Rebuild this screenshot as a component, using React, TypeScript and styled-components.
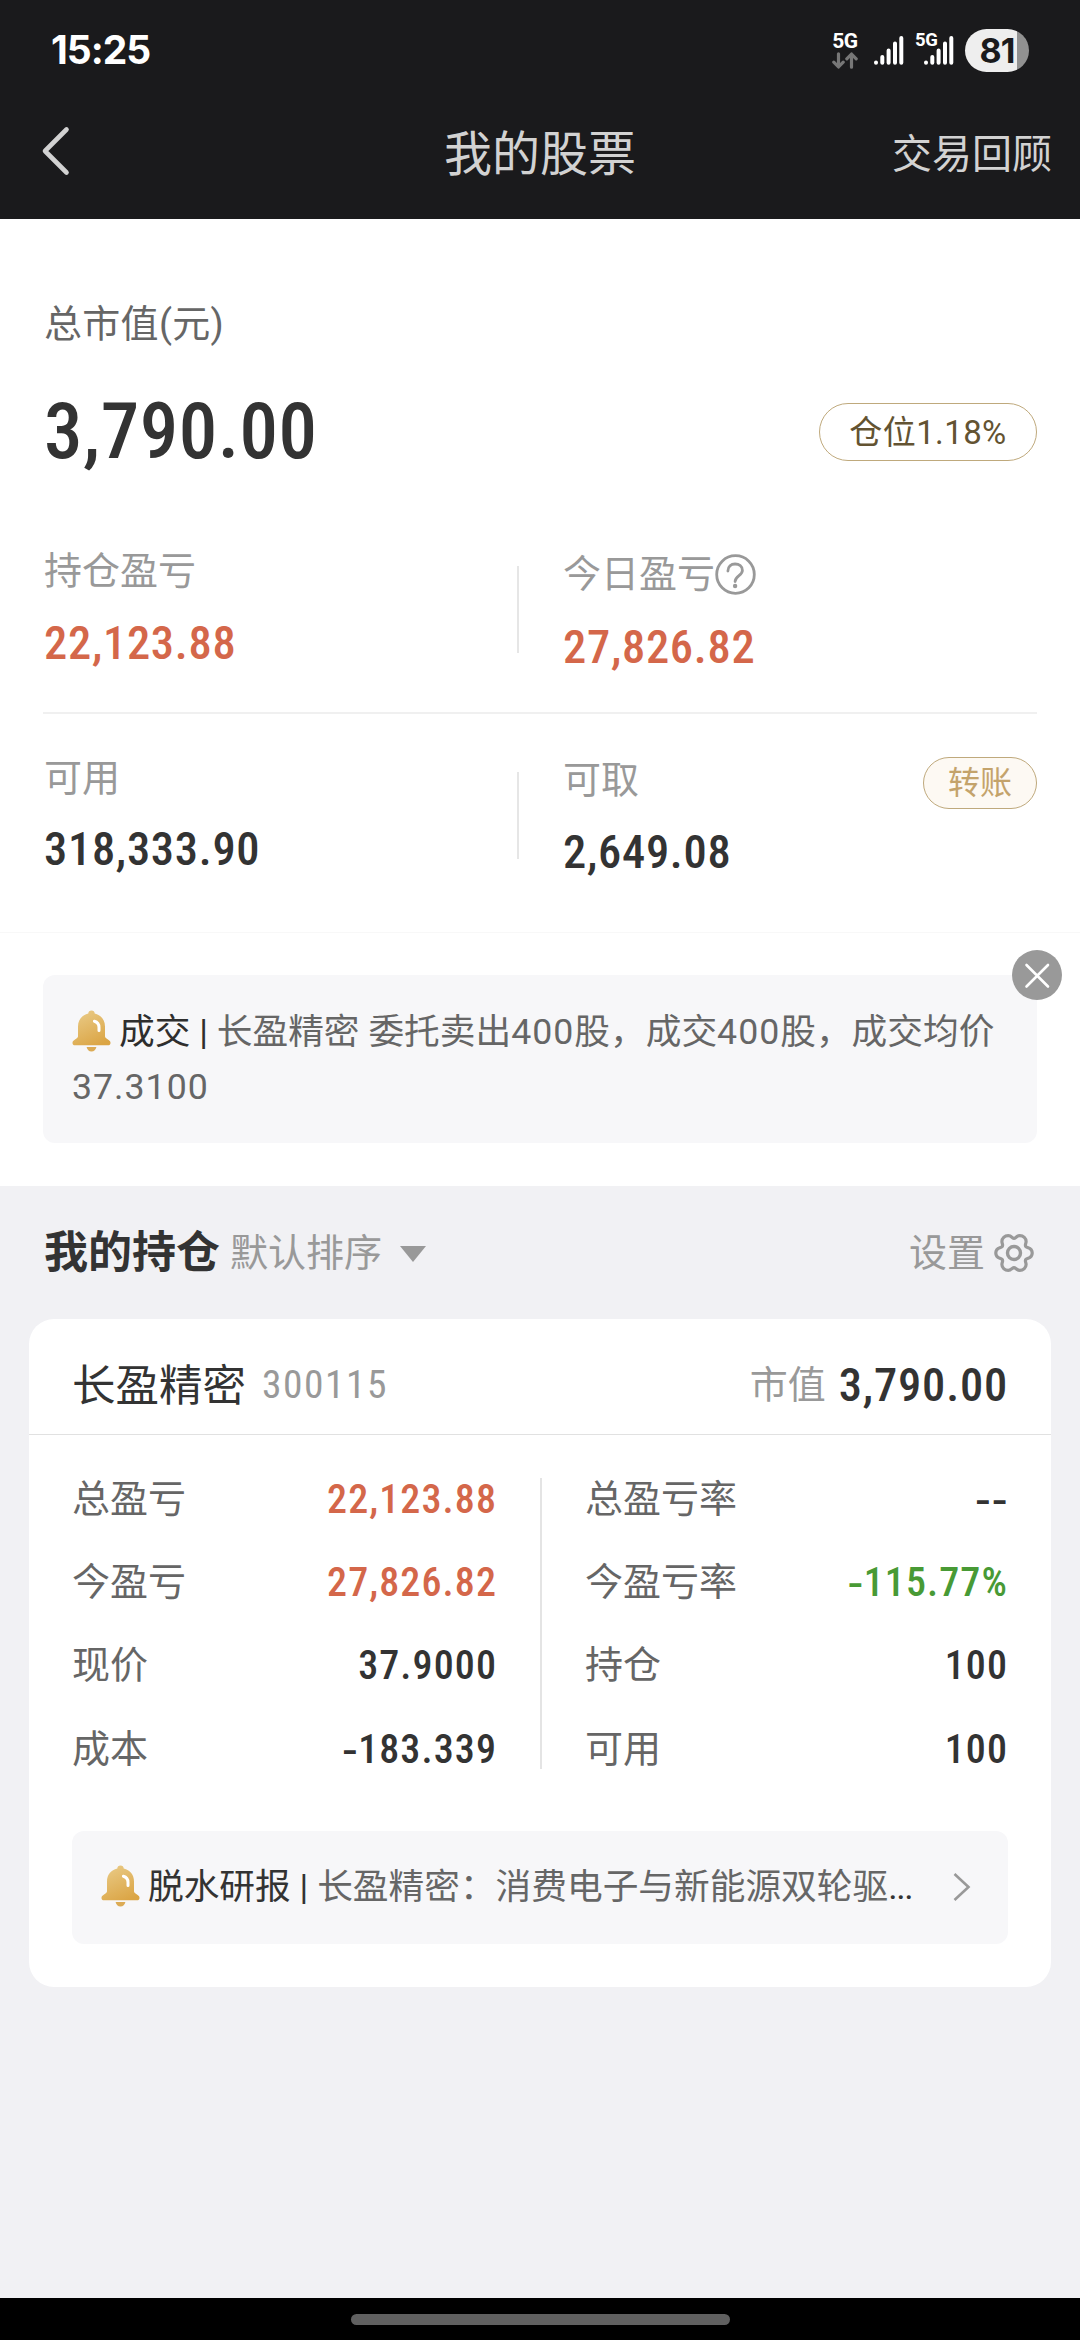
import React from 'react';
import styled, { createGlobalStyle } from 'styled-components';

const GlobalStyle = createGlobalStyle`
  * { box-sizing: border-box; }
  body {
    margin: 0;
    background: #f1f1f4;
    font-family: Roboto, "Noto Sans CJK SC", sans-serif;
    color: #333;
  }
  svg { display: block; flex: none; }
`;

const numeric = '"Roboto Condensed", Roboto, sans-serif';
const red = '#d4674a';
const green = '#489a35';
const ink = '#333333';

const Screen = styled.div`
  display: flex;
  flex-direction: column;
  width: 1080px;
  height: 2340px;
  overflow: hidden;
`;

/* ---------- status bar ---------- */
const StatusBar = styled.div`
  display: flex;
  justify-content: space-between;
  align-items: center;
  height: 100px;
  padding: 0 51px;
  background: #1a1a1c;
`;

const Clock = styled.div`
  font: 700 39px/44px Inter, sans-serif;
  letter-spacing: -1px;
  color: #fff;
`;

const StatusIcons = styled.div`
  display: flex;
  align-items: center;
`;

const Network = styled.div`
  display: flex;
  flex-direction: column;
  align-items: center;
  gap: 3px;
  width: 26px;
  margin: 2px 16px 0 0;
`;

const NetworkText = styled.span`
  font: 700 21px/16px Roboto, sans-serif;
  letter-spacing: -0.4px;
  color: #fff;
`;

const SecondSim = styled.div`
  position: relative;
  margin: 0 11px 0 20px;
`;

const SimTag = styled.span`
  position: absolute;
  left: -9px;
  top: -3px;
  font: 700 18.5px/16px Roboto, sans-serif;
  letter-spacing: -0.4px;
  color: #fff;
`;

const Battery = styled.div`
  display: flex;
  align-items: center;
  justify-content: center;
  width: 64px;
  height: 43px;
  border-radius: 22px;
  background: linear-gradient(to right, #eeeeee 81%, #919191 81%);
  font: 700 34px/43px Inter, sans-serif;
  letter-spacing: -1px;
  color: #1a1a1c;
`;

/* ---------- title bar ---------- */
const TitleBar = styled.header`
  display: grid;
  grid-template-columns: 200px 1fr 200px;
  align-items: center;
  height: 119px;
  padding: 0 28px 10px 41px;
  background: #1a1a1c;
  color: #d2d2d2;
`;

const BackSlot = styled.div`
  margin-bottom: 7px;
`;

const Title = styled.h1`
  margin: 0 0 0 -13px;
  font-size: 48px;
  line-height: 60px;
  font-weight: 400;
  text-align: center;
`;

const TitleAction = styled.div`
  font-size: 40px;
  line-height: 60px;
  text-align: right;
  white-space: nowrap;
`;

/* ---------- account summary ---------- */
const Summary = styled.section`
  display: flex;
  flex-direction: column;
  height: 713px;
  padding: 77px 43px 0;
  background: #fff;
`;

const SummaryLabel = styled.div`
  padding-left: 1px;
  font-size: 38px;
  line-height: 56px;
  letter-spacing: 0.3px;
  color: #666;
`;

const TotalRow = styled.div`
  display: flex;
  justify-content: space-between;
  align-items: center;
  height: 58px;
  margin-top: 51px;
`;

const TotalValue = styled.div`
  padding-left: 1px;
  font: 550 77px/58px ${numeric};
  letter-spacing: 0.5px;
`;

const Pill = styled.div<{ $soft?: boolean }>`
  display: flex;
  align-items: center;
  justify-content: center;
  width: ${(p) => (p.$soft ? 114 : 218)}px;
  height: ${(p) => (p.$soft ? 52 : 58)}px;
  margin-top: ${(p) => (p.$soft ? 4 : 0)}px;
  border: 1px solid #bfa97c;
  border-radius: 29px;
  background: ${(p) => (p.$soft ? '#fdf9f3' : '#fff')};
  color: ${(p) => (p.$soft ? '#c4a36b' : '#635332')};
  font-size: ${(p) => (p.$soft ? 32 : 33)}px;
  letter-spacing: ${(p) => (p.$soft ? 0 : 0.4)}px;
  line-height: 1;
`;

const StatRow = styled.div<{ $top: number; $height: number }>`
  display: flex;
  height: ${(p) => p.$height}px;
  padding-top: ${(p) => p.$top}px;
  flex: none;
`;

const Stat = styled.div<{ $gap: number; $shift?: number; $first?: boolean }>`
  display: flex;
  flex-direction: column;
  gap: ${(p) => p.$gap}px;
  width: ${(p) => (p.$first ? '474px' : 'auto')};
  padding: ${(p) => p.$shift || 0}px 0 0 ${(p) => (p.$first ? 1 : 0)}px;
  flex: ${(p) => (p.$first ? 'none' : 1)};
`;

const StatLabel = styled.div`
  display: flex;
  align-items: center;
  font-size: 38px;
  line-height: 50px;
  color: #999;
`;

const StatValue = styled.div<{ $color?: string }>`
  font: 540 46.5px/50px ${numeric};
  letter-spacing: 0.7px;
  color: ${(p) => p.$color || ink};
`;

const StatDivider = styled.div<{ $top: number }>`
  width: 2px;
  height: 87px;
  margin: ${(p) => p.$top}px 44px 0 0;
  background: #e6e6e6;
`;

const Rule = styled.div`
  height: 2px;
  flex: none;
  background: #f0f0f0;
`;

/* ---------- notices ---------- */
const NoticeSection = styled.section`
  height: 254px;
  padding: 42px 43px 0;
  border-top: 1px solid #f8f8f8;
  background: #fff;
`;

const DealNotice = styled.div`
  position: relative;
  height: 168px;
  padding: 30px 29px 0;
  border-radius: 12px;
  background: #f7f7f9;
`;

const NoticeText = styled.div`
  font-size: 35.7px;
  line-height: 55px;
  color: #666;
`;

const BellSlot = styled.span`
  display: inline-block;
  width: 39px;
  margin-right: 8px;
  vertical-align: -8px;
`;

const Strong = styled.span`
  color: #2e2e2e;
`;

const Digits = styled.span`
  letter-spacing: 1px;
`;

const CloseButton = styled.div`
  position: absolute;
  right: -25px;
  top: -25px;
`;

const ReportNotice = styled.div`
  display: flex;
  align-items: center;
  justify-content: space-between;
  height: 113px;
  margin: 40px 43px 0;
  padding: 0 37px 0 29px;
  border-radius: 12px;
  background: #f7f7f9;
`;

const ReportText = styled.div`
  white-space: nowrap;
  font-size: 35.7px;
  line-height: 55px;
  color: ${ink};
`;

const Muted = styled.span`
  color: #666;
`;

const Dots = styled.span`
  letter-spacing: -1.4px;
`;

/* ---------- holdings ---------- */
const HoldingsBar = styled.div`
  display: flex;
  align-items: center;
  height: 133px;
  padding: 0 46px 0 44px;
  color: #999;
  font-size: 38px;
  line-height: 56px;
`;

const HoldingsTitle = styled.h2`
  margin: 0 10px 0 0;
  font-size: 44px;
  line-height: 56px;
  font-weight: 700;
  color: ${ink};
`;

const SortArrow = styled.span`
  margin: 3px auto 0 18px;
  border: 13px solid transparent;
  border-top: 16px solid #999;
  border-bottom: 0;
`;

const SettingsLabel = styled.span`
  margin-right: 9px;
`;

const Card = styled.section`
  display: flex;
  flex-direction: column;
  height: 668px;
  margin: 0 29px;
  border-radius: 25px;
  background: #fff;
`;

const CardHeader = styled.div`
  display: flex;
  align-items: center;
  height: 116px;
  padding: 17px 43px 0;
  border-bottom: 1px solid #e1e1e1;
  color: #999;
`;

const StockName = styled.div`
  margin-top: 3px;
  font-size: 43.5px;
  line-height: 56px;
  color: ${ink};
`;

const StockCode = styled.div`
  margin: 0 auto 0 16px;
  font: 400 39.5px/56px ${numeric};
  letter-spacing: 1.5px;
`;

const MarketLabel = styled.div`
  margin-right: 13px;
  font-size: 38px;
  line-height: 56px;
`;

const MarketValue = styled.div`
  font: 540 46.5px/56px ${numeric};
  letter-spacing: 0.8px;
  color: ${ink};
`;

const Details = styled.div`
  display: grid;
  grid-template-columns: 425px 2px 423px;
  column-gap: 43px;
  padding: 22px 41px 0 43px;
`;

const DetailColumn = styled.div`
  display: flex;
  flex-direction: column;
`;

const DetailRow = styled.div`
  display: flex;
  align-items: center;
  justify-content: space-between;
  height: 83.4px;
`;

const DetailLabel = styled.span`
  font-size: 38px;
  line-height: 56px;
  color: #666;
`;

const DetailValue = styled.span<{ $color?: string }>`
  margin-top: 2px;
  font: 490 40px/56px ${numeric};
  letter-spacing: 1.1px;
  color: ${(p) => p.$color || ink};
`;

const Sign = styled.span`
  font: 600 36px/56px Inter, sans-serif;
  letter-spacing: 0;
`;

const DetailDivider = styled.div`
  margin: 21px 0 22px;
  background: #e4e4e4;
`;

const GestureBar = styled.div`
  display: flex;
  justify-content: center;
  height: 42px;
  margin-top: auto;
  padding-top: 16px;
  background: #000;
`;

const GestureHandle = styled.div`
  width: 379px;
  height: 11px;
  border-radius: 6px;
  background: #606060;
`;

/* ---------- icons ---------- */
const SignalIcon = () => (
  <svg width="30" height="30" viewBox="0 0 30 30" stroke="#fff" strokeWidth="4" strokeLinecap="round">
    <path d="M2 27.4v.4M8.3 22v5.8M14.6 15.6v12.2M21 8.6v19.2M27.3 3v24.8" />
  </svg>
);

const DataArrows = () => (
  <svg width="26" height="17" viewBox="0 0 26 17" fill="none" stroke="#777" strokeWidth="3.2" strokeLinecap="round" strokeLinejoin="round">
    <path d="M6.5 1.8v13M1.8 10.2l4.7 4.8 4.7-4.8M19.5 15.2v-13M14.8 6.8L19.5 2l4.7 4.8" />
  </svg>
);

const BackIcon = () => (
  <svg width="30" height="52" viewBox="0 0 30 52" fill="none" stroke="#d2d2d2" strokeWidth="4.6" strokeLinecap="round" strokeLinejoin="round">
    <path d="M25.5 4.500L4 26l21.500 21.500" />
  </svg>
);

const HelpIcon = () => (
  <svg width="41" height="41" viewBox="0 0 41 41" fill="none" stroke="#999" strokeWidth="2.8" strokeLinecap="round">
    <circle cx="20.5" cy="20.5" r="18.8" />
    <path d="M12.9 17c0-4.6 3.2-7 7.2-7s7.3 2.400 7.300 6.400c0 5-7.300 5.400-7.300 11.200" />
    <circle cx="20.100" cy="32" r="2.200" fill="#999" stroke="none" />
  </svg>
);

const BellIcon = ({ id }: { id: string }) => (
  <svg width="39" height="42" viewBox="0 0 39 42">
    <defs>
      <linearGradient id={id} x1="0.2" y1="0" x2="0.7" y2="1">
        <stop offset="0" stopColor="#e9ca86" />
        <stop offset="1" stopColor="#dba545" />
      </linearGradient>
    </defs>
    <path
      d="M19.500.5c1.900 0 3.200 1.300 3.200 3.100C29 5 33 9.800 33 16.500V26c0 1 .4 1.600 1.200 2.200l2.800 2c1.200.9 1.500 1.700 1.500 2.700 0 1.400-1 2.300-2.500 2.300H3C1.500 35.200.5 34.300.5 32.900c0-1 .3-1.800 1.500-2.700l2.800-2C5.600 27.600 6 27 6 26v-9.500C6 9.800 10 5 16.300 3.600c0-1.800 1.300-3.100 3.200-3.100z"
      fill={`url(#${id})`}
    />
    <path d="M14.600 37h9.800c-.5 2.700-2.300 4.500-4.900 4.500s-4.400-1.800-4.900-4.500z" fill="#dcab55" />
    <path d="M22.400 11.200c3 .8 4.600 3 4.600 6.200v3" fill="none" stroke="#fff" strokeWidth="3" strokeLinecap="round" />
  </svg>
);

const CloseIcon = () => (
  <svg width="50" height="50" viewBox="0 0 50 50">
    <circle cx="25" cy="25" r="25" fill="#999" />
    <path d="M14.500 15l21.500 21.500M36 15L14.500 36.500" stroke="#fff" strokeWidth="2.600" strokeLinecap="round" />
  </svg>
);

const GearIcon = () => (
  <svg width="40" height="40" viewBox="0 0 40 40" fill="none" stroke="#999" strokeLinejoin="round">
    <path
      strokeWidth="3.200"
      d="M20 5.400C21.600 5.400 22.400 2.700 25.800 2.700C29.400 2.700 32.100 5.400 32.100 8.600C32.100 10.800 30.600 12 31.800 13.600C33.800 15.400 38.200 14.200 38.200 20C38.200 25.800 33.800 24.600 31.800 26.400C30.600 28 32.100 29.200 32.100 31.400C32.100 34.600 29.400 37.300 25.800 37.300C22.400 37.300 21.600 34.600 20 34.600C18.400 34.600 17.600 37.300 14.200 37.300C10.600 37.300 7.900 34.600 7.900 31.400C7.900 29.200 9.400 28 8.200 26.400C6.200 24.600 1.800 25.800 1.800 20C1.800 14.200 6.200 15.400 8.200 13.600C9.400 12 7.900 10.800 7.900 8.600C7.900 5.400 10.600 2.700 14.200 2.700C17.600 2.700 18.400 5.400 20 5.400Z"
    />
    <circle cx="20" cy="20" r="6.500" strokeWidth="3.400" />
  </svg>
);

const ChevronIcon = () => (
  <svg width="18" height="32" viewBox="0 0 18 32" fill="none" stroke="#999" strokeWidth="2.600">
    <path d="M1.500 3l14 13-14 13" />
  </svg>
);

interface Detail {
  label: string;
  sign?: string;
  value?: string;
  color?: string;
}

const leftDetails: Detail[] = [
  { label: '总盈亏', value: '22,123.88', color: red },
  { label: '今盈亏', value: '27,826.82', color: red },
  { label: '现价', value: '37.9000' },
  { label: '成本', sign: '-', value: '183.339' },
];

const rightDetails: Detail[] = [
  { label: '总盈亏率', sign: '--' },
  { label: '今盈亏率', sign: '-', value: '115.77%', color: green },
  { label: '持仓', value: '100' },
  { label: '可用', value: '100' },
];

const DetailList = ({ items }: { items: Detail[] }) => (
  <DetailColumn>
    {items.map((item) => (
      <DetailRow key={item.label}>
        <DetailLabel>{item.label}</DetailLabel>
        <DetailValue $color={item.color}>
          {item.sign && <Sign>{item.sign}</Sign>}
          {item.value}
        </DetailValue>
      </DetailRow>
    ))}
  </DetailColumn>
);

export default function App() {
  return (
    <Screen>
      <GlobalStyle />
      <StatusBar>
        <Clock>15:25</Clock>
        <StatusIcons>
          <Network>
            <NetworkText>5G</NetworkText>
            <DataArrows />
          </Network>
          <SignalIcon />
          <SecondSim>
            <SimTag>5G</SimTag>
            <SignalIcon />
          </SecondSim>
          <Battery>81</Battery>
        </StatusIcons>
      </StatusBar>
      <TitleBar>
        <BackSlot>
          <BackIcon />
        </BackSlot>
        <Title>我的股票</Title>
        <TitleAction>交易回顾</TitleAction>
      </TitleBar>

      <Summary>
        <SummaryLabel>总市值(元)</SummaryLabel>
        <TotalRow>
          <TotalValue>3,790.00</TotalValue>
          <Pill>仓位1.18%</Pill>
        </TotalRow>
        <StatRow $top={85} $height={251}>
          <Stat $first $gap={22}>
            <StatLabel>持仓盈亏</StatLabel>
            <StatValue $color={red}>22,123.88</StatValue>
          </Stat>
          <StatDivider $top={20} />
          <Stat $gap={23} $shift={3}>
            <StatLabel>
              今日盈亏
              <HelpIcon />
            </StatLabel>
            <StatValue $color={red}>27,826.82</StatValue>
          </Stat>
        </StatRow>
        <Rule />
        <StatRow $top={39} $height={218}>
          <Stat $first $gap={21}>
            <StatLabel>可用</StatLabel>
            <StatValue>318,333.90</StatValue>
          </Stat>
          <StatDivider $top={19} />
          <Stat $gap={22} $shift={2}>
            <StatLabel>可取</StatLabel>
            <StatValue>2,649.08</StatValue>
          </Stat>
          <Pill $soft>转账</Pill>
        </StatRow>
      </Summary>

      <NoticeSection>
        <DealNotice>
          <NoticeText>
            <BellSlot>
              <BellIcon id="bell-deal" />
            </BellSlot>
            <Strong>成交 | </Strong>
            长盈精密 委托卖出<Digits>400</Digits>股，成交<Digits>400</Digits>股，成交均价
            <br />
            <Digits>37.3100</Digits>
          </NoticeText>
          <CloseButton>
            <CloseIcon />
          </CloseButton>
        </DealNotice>
      </NoticeSection>

      <HoldingsBar>
        <HoldingsTitle>我的持仓</HoldingsTitle>
        默认排序
        <SortArrow />
        <SettingsLabel>设置</SettingsLabel>
        <GearIcon />
      </HoldingsBar>

      <Card>
        <CardHeader>
          <StockName>长盈精密</StockName>
          <StockCode>300115</StockCode>
          <MarketLabel>市值</MarketLabel>
          <MarketValue>3,790.00</MarketValue>
        </CardHeader>
        <Details>
          <DetailList items={leftDetails} />
          <DetailDivider />
          <DetailList items={rightDetails} />
        </Details>
        <ReportNotice>
          <ReportText>
            <BellSlot>
              <BellIcon id="bell-report" />
            </BellSlot>
            脱水研报 | <Muted>长盈精密：消费电子与新能源双轮驱</Muted>
            <Dots>...</Dots>
          </ReportText>
          <ChevronIcon />
        </ReportNotice>
      </Card>

      <GestureBar>
        <GestureHandle />
      </GestureBar>
    </Screen>
  );
}
